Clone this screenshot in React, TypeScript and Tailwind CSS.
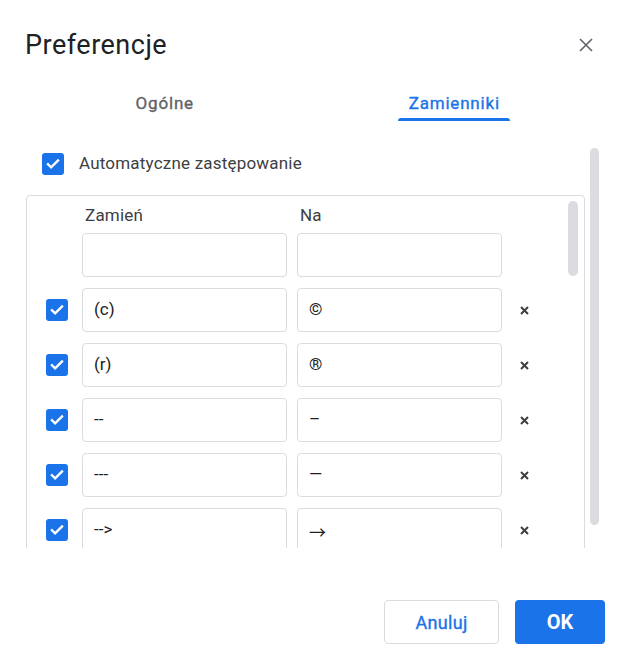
import React from 'react';

const ROWS = [
  { from: '(c)', to: '©' },
  { from: '(r)', to: '®' },
  { from: '--', to: '–' },
  { from: '---', to: '—' },
  { from: '-->', to: '→', arrow: true },
];

const Check = () => (
  <div className="w-[22px] h-[22px] rounded-[3px] bg-[#1a73e8] flex items-center justify-center shrink-0">
    <svg width="16" height="16" viewBox="0 0 16 16">
      <path d="M3 8.3l3.1 3.1L13 4.5" fill="none" stroke="white" strokeWidth="2.4" strokeLinecap="square" />
    </svg>
  </div>
);

const Field = ({ value, arrow }: { value?: string; arrow?: boolean }) => (
  <div className="w-[205px] h-[44px] shrink-0 rounded-[4px] border border-[#dadce0] bg-white flex items-center pl-[11px] text-[17px] text-[#202124]">
    {arrow ? <span className="font-['Noto_Sans_CJK_JP',sans-serif] text-[17px] leading-none mt-[2px]">{value}</span> : value}
  </div>
);

export default function App() {
  return (
    <div className="w-[631px] h-[666px] bg-white flex flex-col font-['Roboto','Liberation_Sans',sans-serif] overflow-hidden">
      {/* header */}
      <div className="flex items-center justify-between pl-[25px] pr-[38px] pt-[29px]">
        <h1 className="text-[27px] leading-[32px] tracking-[0.5px] text-[#202124]">Preferencje</h1>
        <svg width="14" height="14" viewBox="0 0 14 14">
          <path d="M1 1l12 12M13 1L1 13" stroke="#5f6368" strokeWidth="1.6" />
        </svg>
      </div>

      {/* tabs */}
      <div className="grid grid-cols-2 pl-[20px] pr-[32px] mt-[30px]">
        <div className="flex flex-col items-center">
          <span className="text-[17px] leading-[24px] tracking-[0.8px] [-webkit-text-stroke:0.35px] text-[#5f6368]">Ogólne</span>
        </div>
        <div className="flex flex-col items-center">
          <span className="text-[17px] leading-[24px] tracking-[0.8px] [-webkit-text-stroke:0.35px] text-[#1a73e8]">Zamienniki</span>
          <div className="mt-[3px] h-[3px] w-[112px] rounded-t-[3px] bg-[#1a73e8]" />
        </div>
      </div>

      {/* scroll area */}
      <div className="flex mt-[27px] pl-[26px] h-[400px]">
        <div className="w-[559px] overflow-hidden">
          <div className="flex items-center gap-[15px] pl-[16px] pt-[5px] h-[27px]">
            <Check />
            <span className="text-[17px] tracking-[0.2px] text-[#3c4043]">Automatyczne zastępowanie</span>
          </div>

          <div className="mt-[20px] border border-[#dadce0] rounded-[4px] flex h-[420px]">
            <div className="flex-1 pl-[19px] pt-[8px]">
              <div className="flex h-[24px] items-center text-[17px] tracking-[0.2px] text-[#3c4043]">
                <span className="ml-[39px] w-[215px]">Zamień</span>
                <span>Na</span>
              </div>
              <div className="mt-[5px] flex flex-col gap-[11px]">
                <div className="flex items-center gap-[10px] pl-[36px]">
                  <Field />
                  <Field />
                </div>
                {ROWS.map(r => (
                  <div key={r.from} className="flex items-center">
                    <Check />
                    <div className="ml-[14px] flex gap-[10px]">
                      <Field value={r.from} />
                      <Field value={r.to} arrow={r.arrow} />
                    </div>
                    <svg className="ml-[18px]" width="9" height="9" viewBox="0 0 9 9">
                      <path d="M1 1l7 7M8 1L1 8" stroke="#3c4043" strokeWidth="2" />
                    </svg>
                  </div>
                ))}
              </div>
            </div>
            <div className="w-[10px] mr-[6px] mt-[5px] h-[75px] rounded-full bg-[#dadce0]" />
          </div>
        </div>
        <div className="ml-[5px] w-[9px] h-[377px] rounded-full bg-[#dadce0]" />
      </div>

      {/* footer */}
      <div className="flex justify-end gap-[16px] pr-[26px] mt-[52px]">
        <button className="w-[115px] h-[44px] rounded-[4px] border border-[#dadce0] bg-white text-[18px] tracking-[0.3px] [-webkit-text-stroke:0.35px] text-[#1a73e8]">
          Anuluj
        </button>
        <button className="w-[90px] h-[44px] rounded-[4px] bg-[#1a73e8] text-[20px] font-bold text-white">
          OK
        </button>
      </div>
    </div>
  );
}
